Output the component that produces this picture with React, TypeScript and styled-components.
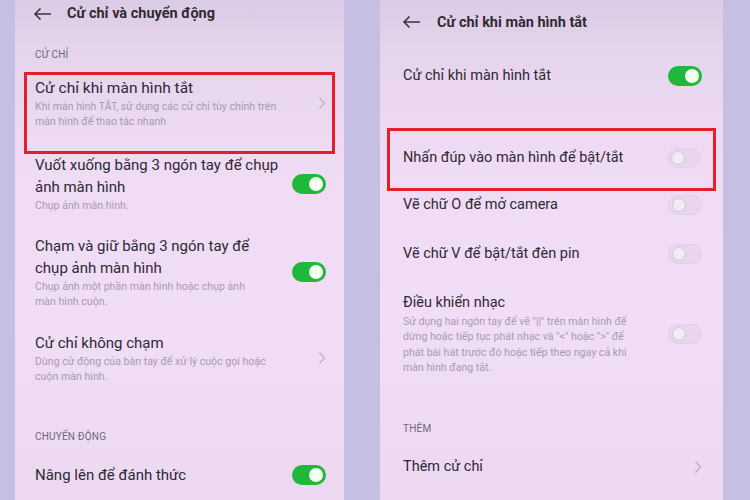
import styled, { createGlobalStyle } from "styled-components";

const GlobalStyle = createGlobalStyle`
  html, body {
    margin: 0;
    padding: 0;
    background: #c5bfe4;
  }
  body {
    font-family: Roboto, "Noto Sans", "DejaVu Sans", sans-serif;
    color: #2e2a33;
  }
`;

const Page = styled.div`
  width: 750px;
  height: 500px;
  overflow: hidden;
  display: flex;
  background: #c5bfe4;
`;

const Panel = styled.div<{ $left: number; $width: number }>`
  margin-left: ${(p) => p.$left}px;
  width: ${(p) => p.$width}px;
  height: 500px;
  flex-shrink: 0;
  overflow: hidden;
  display: flex;
  flex-direction: column;
  background: linear-gradient(
    180deg,
    #dccbe5 0px,
    #e6d3ec 50px,
    #efdbf4 160px,
    #f1ddf5 320px,
    #ecd8f1 500px
  );
`;

const Header = styled.div<{ $height: number; $pad: number; $gap: number }>`
  height: ${(p) => p.$height}px;
  flex-shrink: 0;
  display: flex;
  align-items: center;
  gap: ${(p) => p.$gap}px;
  padding-left: ${(p) => p.$pad}px;
`;

const HeaderTitle = styled.div`
  font-size: 14.5px;
  font-weight: 700;
  color: #2f2b33;
`;

const SectionLabel = styled.div<{ $top: number }>`
  margin-top: ${(p) => p.$top}px;
  font-size: 10px;
  line-height: 14px;
  color: #6f6873;
  letter-spacing: 0.2px;
`;

const Highlight = styled.div<{ $top: number; $side: number; $padLeft: number; $padRight: number }>`
  margin: ${(p) => p.$top}px ${(p) => p.$side}px 0;
  border: 3px solid #e41f2c;
  padding: 0 ${(p) => p.$padRight}px 0 ${(p) => p.$padLeft}px;
`;

const Item = styled.div<{ $top?: number; $height?: number; $padTop?: number; $padBottom?: number }>`
  display: flex;
  align-items: center;
  gap: 12px;
  margin-top: ${(p) => p.$top ?? 0}px;
  padding-top: ${(p) => p.$padTop ?? 0}px;
  padding-bottom: ${(p) => p.$padBottom ?? 0}px;
  ${(p) => (p.$height ? `height: ${p.$height}px; box-sizing: border-box;` : "")}
`;

const Inset = styled.div<{ $left: number; $right: number }>`
  padding: 0 ${(p) => p.$right}px 0 ${(p) => p.$left}px;
  display: flex;
  flex-direction: column;
`;

const Texts = styled.div`
  flex: 1;
  min-width: 0;
`;

const Title = styled.div<{ $size?: number }>`
  font-size: ${(p) => p.$size ?? 15}px;
  line-height: 22px;
  color: #2e2a33;
`;

const Sub = styled.div<{ $lh?: number }>`
  font-size: 10.6px;
  line-height: ${(p) => p.$lh ?? 15}px;
  color: #a59daa;
`;

const Track = styled.div<{ $on: boolean }>`
  width: 34px;
  height: 20px;
  border-radius: 10px;
  flex-shrink: 0;
  box-sizing: border-box;
  display: flex;
  align-items: center;
  padding: 0 3px;
  justify-content: ${(p) => (p.$on ? "flex-end" : "flex-start")};
  background: ${(p) => (p.$on ? "#1fb83a" : "#e8d7ec")};
  border: ${(p) => (p.$on ? "none" : "1px solid #e2d0e6")};
`;

const Knob = styled.div<{ $on: boolean }>`
  width: 14px;
  height: 14px;
  border-radius: 50%;
  box-sizing: border-box;
  background: ${(p) => (p.$on ? "#f4fff4" : "#f4e9f6")};
  border: ${(p) => (p.$on ? "none" : "1.5px solid #d6c3da")};
`;

const Toggle = ({ on }: { on: boolean }) => (
  <Track $on={on}>
    <Knob $on={on} />
  </Track>
);

const Chevron = () => (
  <svg width="8" height="14" viewBox="0 0 8 14" style={{ flexShrink: 0 }}>
    <path d="M1.5 1.5 L6.5 7 L1.5 12.5" fill="none" stroke="#bdb3c0" strokeWidth="1.3" />
  </svg>
);

const BackArrow = () => (
  <svg width="19" height="14" viewBox="0 0 19 14">
    <path d="M18 7 H2 M7.5 1.5 L2 7 L7.5 12.5" fill="none" stroke="#3a363d" strokeWidth="1.6" />
  </svg>
);

export default function App() {
  return (
    <Page>
      <GlobalStyle />
      <Panel $left={15} $width={329}>
        <Header $height={27} $pad={18} $gap={15}>
          <BackArrow />
          <HeaderTitle>Cử chỉ và chuyển động</HeaderTitle>
        </Header>
        <Inset $left={20} $right={18}>
          <SectionLabel $top={21}>CỬ CHỈ</SectionLabel>
        </Inset>
        <Highlight $top={10} $side={9} $padLeft={8} $padRight={6}>
          <Item $padTop={2} $padBottom={22}>
            <Texts>
              <Title $size={15.5}>Cử chỉ khi màn hình tắt</Title>
              <Sub>
                Khi màn hình TẮT, sử dụng các cử chỉ tùy chỉnh trên
                <br />
                màn hình để thao tác nhanh
              </Sub>
            </Texts>
            <Chevron />
          </Item>
        </Highlight>
        <Inset $left={20} $right={18}>
          <Item>
            <Texts>
              <Title>
                Vuốt xuống bằng 3 ngón tay để chụp
                <br />
                ảnh màn hình
              </Title>
              <Sub>Chụp ảnh màn hình.</Sub>
            </Texts>
            <Toggle on />
          </Item>
          <Item $top={22}>
            <Texts>
              <Title>
                Chạm và giữ bằng 3 ngón tay để
                <br />
                chụp ảnh màn hình
              </Title>
              <Sub>
                Chụp ảnh một phần màn hình hoặc chụp ảnh
                <br />
                màn hình cuộn.
              </Sub>
            </Texts>
            <Toggle on />
          </Item>
          <Item $top={23}>
            <Texts>
              <Title>Cử chỉ không chạm</Title>
              <Sub>
                Dùng cử động của bàn tay để xử lý cuộc gọi hoặc
                <br />
                cuộn màn hình.
              </Sub>
            </Texts>
            <Chevron />
          </Item>
          <SectionLabel $top={46}>CHUYỂN ĐỘNG</SectionLabel>
          <Item $top={20}>
            <Texts>
              <Title>Nâng lên để đánh thức</Title>
            </Texts>
            <Toggle on />
          </Item>
        </Inset>
      </Panel>

      <Panel $left={36} $width={343}>
        <Header $height={44} $pad={22} $gap={16}>
          <BackArrow />
          <HeaderTitle>Cử chỉ khi màn hình tắt</HeaderTitle>
        </Header>
        <Inset $left={23} $right={21}>
          <Item $height={64}>
            <Texts>
              <Title $size={14.5}>Cử chỉ khi màn hình tắt</Title>
            </Texts>
            <Toggle on />
          </Item>
        </Inset>
        <Highlight $top={20} $side={7} $padLeft={13} $padRight={12}>
          <Item $height={57} $padBottom={3}>
            <Texts>
              <Title $size={14.5}>Nhấn đúp vào màn hình để bật/tắt</Title>
            </Texts>
            <Toggle on={false} />
          </Item>
        </Highlight>
        <Inset $left={23} $right={21}>
          <Item $height={28}>
            <Texts>
              <Title $size={14.5}>Vẽ chữ O để mở camera</Title>
            </Texts>
            <Toggle on={false} />
          </Item>
          <Item $height={70}>
            <Texts>
              <Title $size={14.5}>Vẽ chữ V để bật/tắt đèn pin</Title>
            </Texts>
            <Toggle on={false} />
          </Item>
          <Item $top={3}>
            <Texts>
              <Title $size={14.5}>Điều khiển nhạc</Title>
              <Sub $lh={15.3}>
                Sử dụng hai ngón tay để vẽ "||" trên màn hình để
                <br />
                dừng hoặc tiếp tục phát nhạc và "&lt;" hoặc "&gt;" để
                <br />
                phát bài hát trước đó hoặc tiếp theo ngay cả khi
                <br />
                màn hình đang tắt.
              </Sub>
            </Texts>
            <Toggle on={false} />
          </Item>
          <SectionLabel $top={47}>THÊM</SectionLabel>
          <Item $top={20}>
            <Texts>
              <Title $size={14.5}>Thêm cử chỉ</Title>
            </Texts>
            <Chevron />
          </Item>
        </Inset>
      </Panel>
    </Page>
  );
}
